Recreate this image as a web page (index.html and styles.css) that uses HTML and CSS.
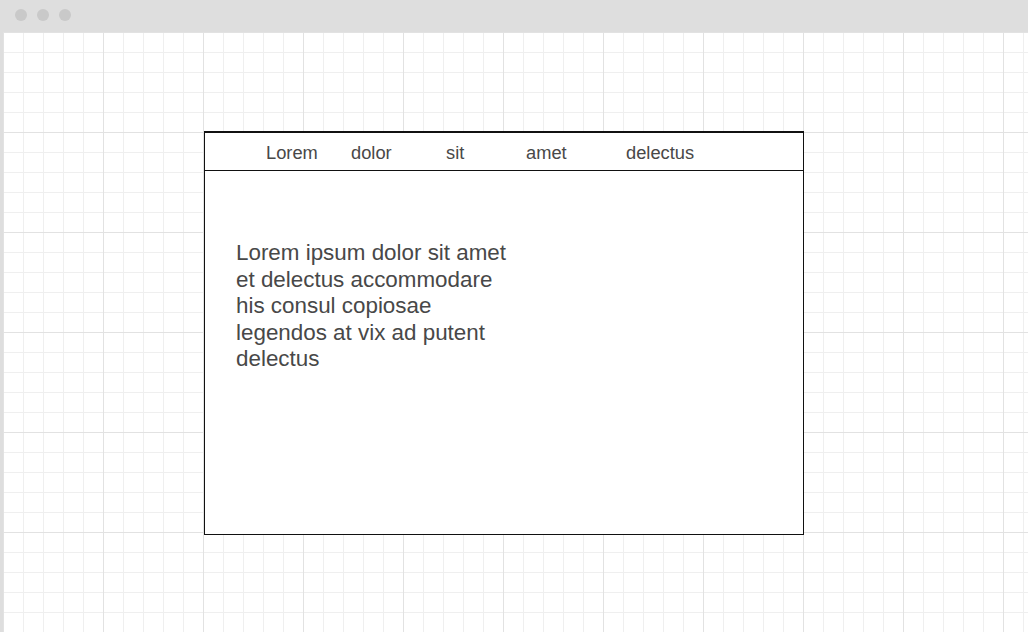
FILE: index.html
```html
<!DOCTYPE html>
<html lang="en">
<head>
<meta charset="utf-8">
<title>Wireframe</title>
<link rel="stylesheet" href="styles.css">
</head>
<body>
<div class="window">
  <div class="titlebar">
    <span class="dot"></span>
    <span class="dot"></span>
    <span class="dot"></span>
  </div>
  <div class="canvas">
    <div class="card">
      <nav class="nav">
        <span class="nav-item">Lorem</span>
        <span class="nav-item">dolor</span>
        <span class="nav-item">sit</span>
        <span class="nav-item">amet</span>
        <span class="nav-item">delectus</span>
      </nav>
      <div class="content">
        <p class="copy">Lorem ipsum dolor sit amet<br>et delectus accommodare<br>his consul copiosae<br>legendos at vix ad putent<br>delectus</p>
      </div>
    </div>
  </div>
</div>
</body>
</html>
```

FILE: styles.css
```css
html, body {
  margin: 0;
  padding: 0;
  width: 1028px;
  height: 632px;
  overflow: hidden;
  background: #ffffff;
  font-family: "Liberation Sans", Arial, sans-serif;
}

.window {
  display: flex;
  flex-direction: column;
  width: 1028px;
  height: 632px;
  background: #dedede;
}

.titlebar {
  height: 32px;
  flex: 0 0 32px;
  box-sizing: border-box;
  display: flex;
  align-items: flex-start;
  gap: 10px;
  padding: 9px 0 0 15px;
}

.dot {
  width: 12px;
  height: 12px;
  border-radius: 50%;
  background: #c9c9c9;
}

.canvas {
  flex: 1;
  margin-left: 3px;
  box-sizing: border-box;
  padding: 99px 0 0 201px;
  background-color: #ffffff;
  background-image:
    linear-gradient(to right, #e2e2e2 1px, transparent 1px),
    linear-gradient(to bottom, #e2e2e2 1px, transparent 1px),
    linear-gradient(to right, #efefef 1px, transparent 1px),
    linear-gradient(to bottom, #efefef 1px, transparent 1px);
  background-size: 100px 100px, 100px 100px, 20px 20px, 20px 20px;
  background-position: 0 0;
}

.card {
  width: 600px;
  height: 404px;
  box-sizing: border-box;
  background: #ffffff;
  border: 1px solid #111111;
  border-top-width: 2px;
  display: flex;
  flex-direction: column;
}

.nav {
  display: grid;
  grid-template-columns: 85px 95px 80px 100px auto;
  padding: 10px 0 7px 61px;
  border-bottom: 1px solid #111111;
  height: 38px;
  box-sizing: border-box;
}

.nav-item {
  font-size: 18.3px;
  line-height: 20px;
  color: #484848;
}

.content {
  padding: 69px 0 0 31px;
}

.copy {
  margin: 0;
  font-size: 22.4px;
  line-height: 26.5px;
  color: #484848;
}
```
